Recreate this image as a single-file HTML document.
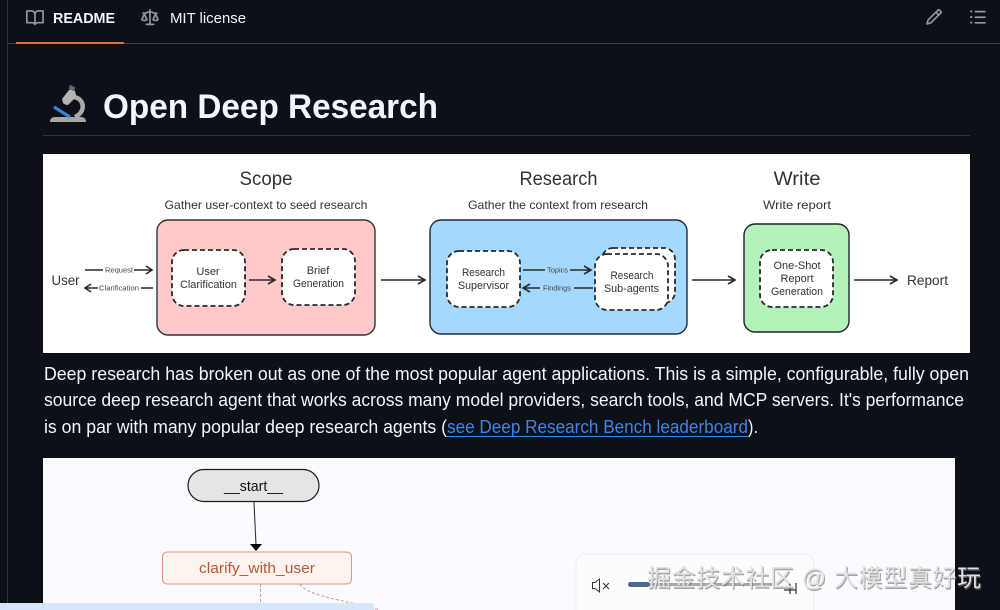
<!DOCTYPE html>
<html lang="en"><head><meta charset="utf-8"><title>Open Deep Research</title>
<style>
html,body{margin:0;padding:0;background:#0d1117;width:1000px;height:610px;overflow:hidden}
svg{display:block}
text{font-family:"Liberation Sans","Noto Sans CJK SC",sans-serif}
.d{fill:#333;text-anchor:middle}
.t{font-size:19px}.s{font-size:12px}.b{font-size:11px}.m{font-size:7px;fill:#444}
.dash{fill:#fff;stroke:#2a2a2a;stroke-width:1.8;stroke-dasharray:5 3}
.ar{fill:none;stroke:#2a2a2a;stroke-width:1.6}
</style></head><body>
<svg width="1000" height="610" viewBox="0 0 1000 610" xmlns="http://www.w3.org/2000/svg">
<rect width="1000" height="610" fill="#0d1117"/>
<rect x="7" y="0" width="1" height="610" fill="#30363d"/>
<rect x="8" y="43" width="992" height="1" fill="#3d444d"/>
<rect x="16" y="42" width="108" height="2" fill="#e8694a"/>

<path transform="translate(26,9) scale(1.12)" fill="#9198a1" d="M0 1.75A.75.75 0 0 1 .75 1h4.253c1.227 0 2.317.59 3 1.501A3.743 3.743 0 0 1 11.006 1h4.245a.75.75 0 0 1 .75.75v10.5a.75.75 0 0 1-.75.75h-4.507a2.25 2.25 0 0 0-1.591.659l-.622.621a.75.75 0 0 1-1.06 0l-.622-.621A2.25 2.25 0 0 0 5.258 13H.75a.75.75 0 0 1-.75-.75Zm7.251 10.324.004-5.073-.002-2.253A2.25 2.25 0 0 0 5.003 2.5H1.5v9h3.757a3.75 3.75 0 0 1 1.994.574ZM8.755 4.75l-.004 7.322a3.752 3.752 0 0 1 1.992-.572H14.5v-9h-3.495a2.25 2.25 0 0 0-2.25 2.25Z"/>
<text x="53" y="23" font-size="14.5" font-weight="700" fill="#f0f6fc" textLength="62" lengthAdjust="spacingAndGlyphs">README</text>
<path transform="translate(141,9) scale(1.12)" fill="#9198a1" d="M8.75.75V2h.985c.304 0 .603.08.867.231l1.29.736c.038.022.08.033.124.033h2.234a.75.75 0 0 1 0 1.5h-.427l2.111 4.692a.75.75 0 0 1-.154.838l-.53-.53.529.531-.001.002-.002.002-.006.006-.006.005-.01.01-.045.04c-.21.176-.441.327-.686.45C14.556 10.78 13.88 11 13 11a4.498 4.498 0 0 1-2.023-.454 3.544 3.544 0 0 1-.686-.45l-.045-.04-.016-.015-.006-.006-.004-.004v-.001a.75.75 0 0 1-.154-.838L12.178 4.5h-.162c-.305 0-.604-.079-.868-.231l-1.29-.736a.245.245 0 0 0-.124-.033H8.75V13h2.5a.75.75 0 0 1 0 1.5h-6.5a.75.75 0 0 1 0-1.5h2.5V3.5h-.984a.245.245 0 0 0-.124.033l-1.289.737c-.265.15-.564.23-.869.23h-.162l2.112 4.692a.75.75 0 0 1-.154.838l-.53-.53.529.531-.001.002-.002.002-.006.006-.016.015-.045.04c-.21.176-.441.327-.686.45C4.556 10.78 3.88 11 3 11a4.498 4.498 0 0 1-2.023-.454 3.544 3.544 0 0 1-.686-.45l-.045-.04-.016-.015-.006-.006-.004-.004v-.001a.75.75 0 0 1-.154-.838L2.178 4.5H1.75a.75.75 0 0 1 0-1.5h2.234a.249.249 0 0 0 .125-.033l1.288-.737c.265-.15.564-.23.869-.23h.984V.75a.75.75 0 0 1 1.5 0Zm2.945 8.477c.285.135.718.273 1.305.273s1.02-.138 1.305-.273L13 6.327Zm-10 0c.285.135.718.273 1.305.273s1.02-.138 1.305-.273L3 6.327Z"/>
<text x="170" y="23" font-size="15" fill="#f0f6fc" textLength="76" lengthAdjust="spacingAndGlyphs">MIT license</text>
<path transform="translate(925,8) scale(1.12)" fill="#9198a1" d="M11.013 1.427a1.75 1.75 0 0 1 2.474 0l1.086 1.086a1.75 1.75 0 0 1 0 2.474l-8.61 8.61c-.21.21-.47.364-.756.445l-3.251.93a.75.75 0 0 1-.927-.928l.929-3.25c.081-.286.235-.547.445-.758l8.61-8.61Zm.176 4.823L9.75 4.81l-6.286 6.287a.253.253 0 0 0-.064.108l-.558 1.953 1.953-.558a.253.253 0 0 0 .108-.064Zm1.238-3.763a.25.25 0 0 0-.354 0L10.811 3.75l1.439 1.44 1.263-1.263a.25.25 0 0 0 0-.354Z"/>
<path transform="translate(969,8) scale(1.12)" fill="#9198a1" d="M5.750 2.500h8.500a.75.75 0 0 1 0 1.500h-8.500a.75.75 0 0 1 0-1.500Zm0 5h8.500a.75.75 0 0 1 0 1.500h-8.500a.75.75 0 0 1 0-1.500Zm0 5h8.500a.75.75 0 0 1 0 1.500h-8.500a.75.75 0 0 1 0-1.500ZM2 14a1 1 0 1 1 0-2 1 1 0 0 1 0 2Zm1-6a1 1 0 1 1-2 0 1 1 0 0 1 2 0ZM2 4a1 1 0 1 1 0-2 1 1 0 0 1 0 2Z"/>

<!-- microscope -->
<path d="M74 97C85 99 86 112 75 117" fill="none" stroke="#a9a9a9" stroke-width="4.500"/>
<path d="M50 122Q50 117 55 117H81Q86 117 86 122Z" fill="#a6a6a6"/>
<path d="M62 99L69 90Q72 88 75 91L76 95Q76 98 73 100L68 105Q65 105 63 103Z" fill="#b4b4b4"/>
<rect x="69" y="86" width="6" height="4" fill="#666" transform="rotate(30 72 88)"/>
<path d="M54 107L70 117" stroke="#3f7fe0" stroke-width="3.200" fill="none"/>
<text x="103" y="118" font-size="34.500" font-weight="700" fill="#f0f6fc" textLength="335" lengthAdjust="spacingAndGlyphs">Open Deep Research</text>
<rect x="43" y="135" width="927" height="1" fill="#30363d"/>

<!-- diagram -->
<rect x="43" y="154" width="927" height="199" fill="#fff"/>
<text class="d t" x="266" y="185" textLength="53" lengthAdjust="spacingAndGlyphs">Scope</text>
<text class="d s" x="266" y="209" textLength="203" lengthAdjust="spacingAndGlyphs">Gather user-context to seed research</text>
<rect x="157" y="220" width="218" height="115" rx="11" fill="#ffc9c9" stroke="#333" stroke-width="1.400"/>
<rect class="dash" x="172" y="250" width="73" height="56" rx="12"/>
<rect class="dash" x="282" y="249" width="73" height="56" rx="12"/>
<text class="d b" x="208" y="275">User</text>
<text class="d b" x="208.500" y="288" textLength="57" lengthAdjust="spacingAndGlyphs">Clarification</text>
<text class="d b" x="318" y="274">Brief</text>
<text class="d b" x="318.500" y="287" textLength="51" lengthAdjust="spacingAndGlyphs">Generation</text>
<text class="d" font-size="14" x="65.500" y="285" textLength="28" lengthAdjust="spacingAndGlyphs">User</text>
<text class="d m" x="119" y="272.500" textLength="28" lengthAdjust="spacingAndGlyphs">Request</text>
<text class="d m" x="119" y="290.500" textLength="40" lengthAdjust="spacingAndGlyphs">Clarification</text>
<path class="ar" d="M85 270H103M134 270H152M146 266L152 270L146 274"/>
<path class="ar" d="M153 288H141M98 288H85M91 284L85 288L91 292"/>
<path class="ar" d="M249 280H275M268 276L275 280L268 284"/>
<path class="ar" d="M381 280H425M418 276L425 280L418 284"/>

<text class="d t" x="558.500" y="185" textLength="78" lengthAdjust="spacingAndGlyphs">Research</text>
<text class="d s" x="558" y="209" textLength="180" lengthAdjust="spacingAndGlyphs">Gather the context from research</text>
<rect x="430" y="220" width="257" height="114" rx="11" fill="#a5d8ff" stroke="#1e2a3a" stroke-width="1.400"/>
<rect class="dash" x="447" y="251" width="73" height="56" rx="12"/>
<rect class="dash" x="602" y="248" width="73" height="55" rx="11"/>
<rect class="dash" x="595" y="254" width="73" height="56" rx="12"/>
<text class="d b" x="483.500" y="276" textLength="43" lengthAdjust="spacingAndGlyphs">Research</text>
<text class="d b" x="483.500" y="289" textLength="51" lengthAdjust="spacingAndGlyphs">Supervisor</text>
<text class="d b" x="632" y="279" textLength="43" lengthAdjust="spacingAndGlyphs">Research</text>
<text class="d b" x="631.500" y="292" textLength="55" lengthAdjust="spacingAndGlyphs">Sub-agents</text>
<text class="d m" x="557.500" y="272.500" textLength="21" lengthAdjust="spacingAndGlyphs">Topics</text>
<text class="d m" x="557" y="290.500" textLength="28" lengthAdjust="spacingAndGlyphs">Findings</text>
<path class="ar" d="M523 270H545M570 270H591M584 266L591 270L584 274"/>
<path class="ar" d="M593 288H574M540 288H523M530 284L523 288L530 292"/>

<text class="d t" x="797" y="185" textLength="47" lengthAdjust="spacingAndGlyphs">Write</text>
<text class="d s" x="797" y="209" textLength="68" lengthAdjust="spacingAndGlyphs">Write report</text>
<rect x="744" y="224" width="105" height="108" rx="11" fill="#b2f2bb" stroke="#222" stroke-width="1.400"/>
<rect class="dash" x="760" y="250" width="73" height="57" rx="12"/>
<text class="d b" x="797" y="269" textLength="47" lengthAdjust="spacingAndGlyphs">One-Shot</text>
<text class="d b" x="797" y="282">Report</text>
<text class="d b" x="797" y="295" textLength="52" lengthAdjust="spacingAndGlyphs">Generation</text>
<path class="ar" d="M692 280H735M728 276L735 280L728 284"/>
<path class="ar" d="M854 280H897M890 276L897 280L890 284"/>
<text class="d" font-size="14" x="927.500" y="285" textLength="41" lengthAdjust="spacingAndGlyphs">Report</text>

<!-- paragraph -->
<g font-size="18" fill="#f0f6fc">
<text x="44" y="380" textLength="925" lengthAdjust="spacingAndGlyphs">Deep research has broken out as one of the most popular agent applications. This is a simple, configurable, fully open</text>
<text x="44" y="406" textLength="920" lengthAdjust="spacingAndGlyphs">source deep research agent that works across many model providers, search tools, and MCP servers. It's performance</text>
<text x="44" y="433" textLength="403" lengthAdjust="spacingAndGlyphs">is on par with many popular deep research agents (</text>
<text x="447" y="433" fill="#4184e4" textLength="301" lengthAdjust="spacingAndGlyphs">see Deep Research Bench leaderboard</text>
<text x="748" y="433" textLength="10" lengthAdjust="spacingAndGlyphs">).</text>
</g>
<rect x="447" y="436" width="301" height="1" fill="#4184e4"/>

<!-- graph image -->
<rect x="43" y="458" width="912" height="152" fill="#fafbfe"/>
<rect x="188" y="469.500" width="131" height="32" rx="16" fill="#e5e5e5" stroke="#1a1a1a" stroke-width="1.200"/>
<text x="224" y="491" font-size="15" fill="#111" textLength="59" lengthAdjust="spacingAndGlyphs">__start__</text>
<path d="M254 502L256 545" stroke="#333" stroke-width="1.100"/>
<path d="M250 544H262L256 551Z" fill="#000"/>
<rect x="162.500" y="552" width="189" height="32" rx="5" fill="#fdf4f0" stroke="#e39576" stroke-width="1"/>
<text x="199" y="573" font-size="15" fill="#b5573a" textLength="116" lengthAdjust="spacingAndGlyphs">clarify_with_user</text>
<path d="M260.500 584V604" stroke="#e39576" stroke-dasharray="3 2" fill="none"/>
<path d="M300 584C306 596 345 600 380 610" stroke="#e39576" stroke-dasharray="3 2" fill="none"/>
<path d="M0 603H370Q374 603 374 607V610H0Z" fill="#d6e6fb"/>

<!-- player -->
<rect x="576" y="554" width="238" height="66" rx="10" fill="#fbfcfe" stroke="#eceef2"/>
<path d="M592.500 582.500V588.500H595L599.500 592V579L595 582.500Z" fill="none" stroke="#333" stroke-width="1"/>
<path d="M603 583L609 589M609 583L603 589" stroke="#333" stroke-width="1"/>
<rect x="628" y="582" width="22" height="5" rx="2.500" fill="#4a6a8f"/>
<rect x="650" y="583" width="122" height="3" fill="#a8a8a8"/>
<path d="M784 590H796M796 583V594M790 584V594" stroke="#333" stroke-width="1.200" fill="none"/>
<text x="647" y="586" font-size="24" fill="#777" opacity=".65" textLength="334" transform="translate(1,1.500)">掘金技术社区 @ 大模型真好玩</text>
<text x="647" y="586" font-size="24" fill="#e2e2e2" textLength="334">掘金技术社区 @ 大模型真好玩</text>
</svg>
</body></html>
